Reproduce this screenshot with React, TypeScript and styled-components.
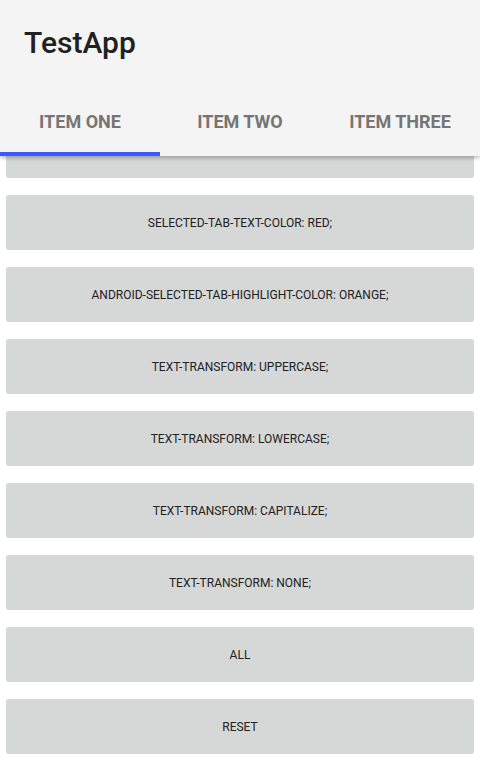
import React from "react";
import styled, { createGlobalStyle } from "styled-components";

const Global = createGlobalStyle`
  html, body { margin: 0; padding: 0; background: #ffffff; }
  body { font-family: Roboto, "Noto Sans", sans-serif; }
`;

const Page = styled.div`
  width: 480px;
  height: 762px;
  display: flex;
  flex-direction: column;
  overflow: hidden;
  background: #ffffff;
`;

const Header = styled.header`
  position: relative;
  z-index: 2;
  background: #f4f4f4;
  box-shadow: 0 2px 4px rgba(0, 0, 0, 0.28);
  display: flex;
  flex-direction: column;
`;

const TitleBar = styled.div`
  height: 84px;
  display: flex;
  align-items: center;
  padding-left: 24px;
`;

const Title = styled.h1`
  margin: 0;
  font-family: Roboto, sans-serif;
  font-size: 30px;
  font-weight: 500;
  color: #212121;
`;

const Tabs = styled.div`
  display: grid;
  grid-template-columns: repeat(3, 1fr);
  height: 72px;
`;

const Tab = styled.div<{ $active?: boolean }>`
  display: flex;
  align-items: center;
  justify-content: center;
  padding-top: 6px;
  font-family: Roboto, sans-serif;
  font-size: 18px;
  font-weight: 700;
  color: #757575;
  text-transform: uppercase;
  border-bottom: 4px solid ${(p) => (p.$active ? "#3d5afe" : "transparent")};
`;

const Scroll = styled.div`
  flex: 1;
  overflow: hidden;
  position: relative;
  z-index: 1;
`;

const List = styled.div`
  display: flex;
  flex-direction: column;
  gap: 17px;
  padding: 0 6px;
  margin-top: -33px;
`;

const Button = styled.div`
  height: 55px;
  border-radius: 3px;
  background: #d6d7d7;
  display: flex;
  align-items: center;
  justify-content: center;
  font-family: Roboto, sans-serif;
  font-size: 12px;
  color: #222222;
  text-transform: uppercase;
`;

const items = [
  "",
  "selected-tab-text-color: red;",
  "android-selected-tab-highlight-color: orange;",
  "text-transform: uppercase;",
  "text-transform: lowercase;",
  "text-transform: capitalize;",
  "text-transform: none;",
  "all",
  "reset",
];

export default function App() {
  return (
    <Page>
      <Global />
      <Header>
        <TitleBar>
          <Title>TestApp</Title>
        </TitleBar>
        <Tabs>
          <Tab $active>Item One</Tab>
          <Tab>Item Two</Tab>
          <Tab>Item Three</Tab>
        </Tabs>
      </Header>
      <Scroll>
        <List>
          {items.map((t, i) => (
            <Button key={i}>{t}</Button>
          ))}
        </List>
      </Scroll>
    </Page>
  );
}
